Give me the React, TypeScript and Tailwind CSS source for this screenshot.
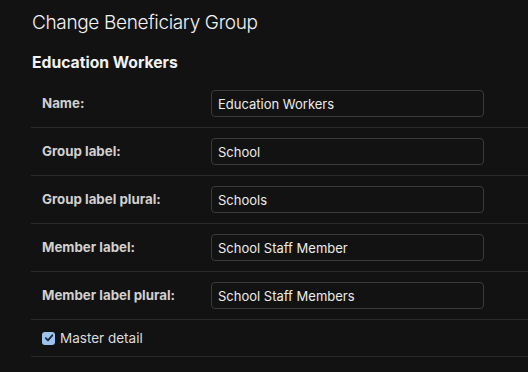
import React from 'react';

const fields = [
  { label: 'Name:', value: 'Education Workers' },
  { label: 'Group label:', value: 'School' },
  { label: 'Group label plural:', value: 'Schools' },
  { label: 'Member label:', value: 'School Staff Member' },
  { label: 'Member label plural:', value: 'School Staff Members' },
];

export default function App() {
  return (
    <div className="min-h-screen w-[528px] h-[372px] overflow-hidden bg-[#121212] font-['Inter',sans-serif]">
      <div className="pl-[32px] pt-[11px]">
        <h1 className="text-[19px] leading-[24px] font-light text-[#f2f2f2] tracking-[-0.35px]">Change Beneficiary Group</h1>
        <h2 className="mt-[18px] text-[15.7px] leading-[20px] font-bold text-[#f2f2f2]">Education Workers</h2>
      </div>
      <div className="ml-[31px] mt-[7px]">
        {fields.map((f) => (
          <div key={f.label} className="flex items-center h-[48px] border-b border-[#2a2a2a]">
            <label className="w-[180px] pl-[11px] text-[13.3px] font-bold text-[#d0d0d0]">{f.label}</label>
            <input
              readOnly
              value={f.value}
              className="w-[273px] h-[27px] px-[6px] rounded-[4px] border border-[#3a3a3a] bg-[#121212] text-[13px] text-[#ececec] outline-none"
            />
          </div>
        ))}
        <div className="flex items-center h-[37px] border-b border-[#2a2a2a] pl-[11px] gap-[5px]">
          <span className="w-[13px] h-[13px] rounded-[3px] bg-[#9ec4ee] flex items-center justify-center">
            <svg width="10" height="10" viewBox="0 0 10 10" fill="none">
              <path d="M1.8 5.2 L4 7.4 L8.3 2.3" stroke="#1b2a3a" strokeWidth="1.8" strokeLinecap="round" strokeLinejoin="round" />
            </svg>
          </span>
          <span className="text-[13.5px] text-[#dcdcdc]">Master detail</span>
        </div>
      </div>
    </div>
  );
}
